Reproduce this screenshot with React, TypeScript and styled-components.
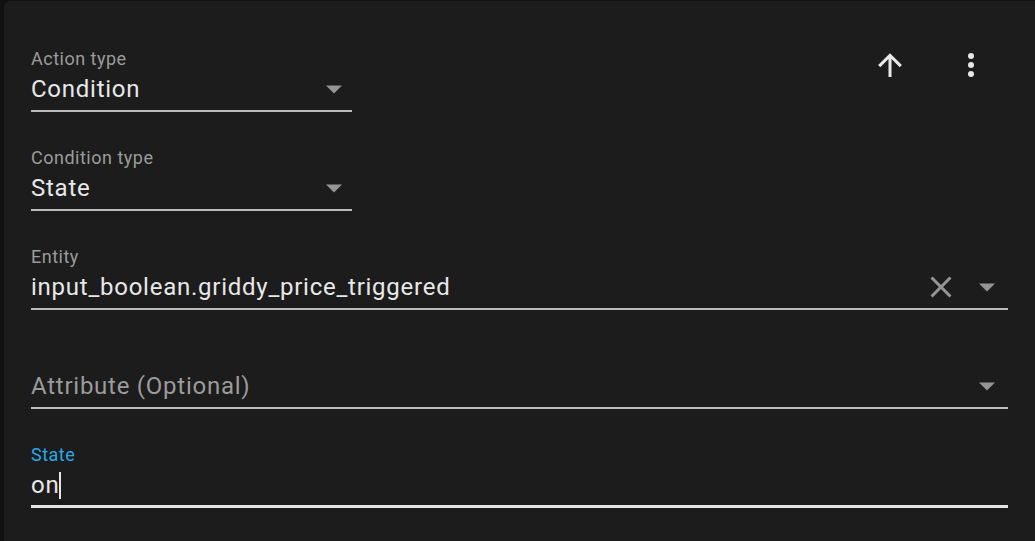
import React from "react";
import styled, { createGlobalStyle } from "styled-components";

const GlobalStyle = createGlobalStyle`
  html, body {
    margin: 0;
    padding: 0;
    background-color: #111111;
    overflow: hidden;
  }
  body {
    width: 1035px;
    height: 541px;
    font-family: Roboto, "Noto Sans", "Liberation Sans", sans-serif;
  }
`;

const Card = styled.div`
  margin: 1px 0 0 4px;
  width: 1045px;
  height: 560px;
  box-sizing: border-box;
  padding: 46px 41px 0 27px;
  background-color: #1c1c1c;
  border-radius: 6px 0 0 0;
  display: flex;
  flex-direction: column;
  gap: 34px;
`;

const TopRow = styled.div`
  display: flex;
  align-items: flex-start;
  justify-content: space-between;
`;

const Menu = styled.div`
  display: flex;
  align-items: center;
  gap: 45px;
  margin: 0 19px 0 0;
`;

const IconButton = styled.div`
  width: 36px;
  height: 36px;
  display: flex;
  align-items: center;
  justify-content: center;
  color: #e8e8e8;
  svg {
    width: 36px;
    height: 36px;
    fill: currentColor;
  }
`;

const Field = styled.div<{ $width?: number }>`
  width: ${(p) => (p.$width ? `${p.$width}px` : "100%")};
  display: flex;
  flex-direction: column;
`;

const Label = styled.div<{ $focused?: boolean }>`
  font-size: 18px;
  line-height: 24px;
  height: 24px;
  color: ${(p) => (p.$focused ? "#29a9e6" : "#9b9b9b")};
  letter-spacing: 0.5px;
`;

const ValueRow = styled.div<{ $noLabel?: boolean }>`
  margin-top: ${(p) => (p.$noLabel ? "26px" : "2px")};
  height: 32px;
  display: flex;
  align-items: center;
`;

const Value = styled.div<{ $placeholder?: boolean }>`
  flex: 1;
  font-size: 24px;
  line-height: 32px;
  letter-spacing: 0.75px;
  color: ${(p) => (p.$placeholder ? "#9b9b9b" : "#e8e8e8")};
  white-space: nowrap;
  display: flex;
  align-items: center;
`;

const Caret = styled.span`
  display: inline-block;
  width: 1.5px;
  height: 27px;
  background-color: #e6e6e6;
`;

const Trailing = styled.div<{ $right: number }>`
  display: flex;
  align-items: center;
  gap: 20px;
  margin-right: ${(p) => p.$right}px;
  color: #959595;
  svg {
    fill: currentColor;
  }
`;

const Underline = styled.div<{ $focused?: boolean }>`
  margin-top: ${(p) => (p.$focused ? "4px" : "5px")};
  height: ${(p) => (p.$focused ? "3px" : "2px")};
  background-color: ${(p) => (p.$focused ? "#e4e4e4" : "#bcbcbc")};
`;

const ArrowUp = () => (
  <svg viewBox="0 0 24 24">
    <path d="M13,20H11V8L5.5,13.5L4.08,12.08L12,4.16L19.92,12.08L18.5,13.5L13,8V20Z" />
  </svg>
);

const DotsVertical = () => (
  <svg viewBox="0 0 24 24">
    <path d="M12,16A2,2 0 0,1 14,18A2,2 0 0,1 12,20A2,2 0 0,1 10,18A2,2 0 0,1 12,16M12,10A2,2 0 0,1 14,12A2,2 0 0,1 12,14A2,2 0 0,1 10,12A2,2 0 0,1 12,10M12,4A2,2 0 0,1 14,6A2,2 0 0,1 12,8A2,2 0 0,1 10,6A2,2 0 0,1 12,4Z" />
  </svg>
);

const MenuDown = () => (
  <svg width="16" height="9" viewBox="0 0 16 9">
    <polygon points="0,0.5 16,0.5 8,8.5" />
  </svg>
);

const Close = () => (
  <svg width="36" height="36" viewBox="0 0 24 24">
    <path d="M19,6.41L17.59,5L12,10.59L6.41,5L5,6.41L10.59,12L5,17.59L6.41,19L12,13.41L17.59,19L19,17.59L13.41,12L19,6.41Z" />
  </svg>
);

export default function App() {
  return (
    <>
      <GlobalStyle />
      <Card>
        <TopRow>
          <Field $width={321}>
            <Label>Action type</Label>
            <ValueRow>
              <Value>Condition</Value>
              <Trailing $right={10}>
                <MenuDown />
              </Trailing>
            </ValueRow>
            <Underline />
          </Field>
          <Menu>
            <IconButton>
              <ArrowUp />
            </IconButton>
            <IconButton>
              <DotsVertical />
            </IconButton>
          </Menu>
        </TopRow>

        <Field $width={321}>
          <Label>Condition type</Label>
          <ValueRow>
            <Value>State</Value>
            <Trailing $right={10}>
              <MenuDown />
            </Trailing>
          </ValueRow>
          <Underline />
        </Field>

        <Field>
          <Label>Entity</Label>
          <ValueRow>
            <Value>input_boolean.griddy_price_triggered</Value>
            <Trailing $right={13}>
              <Close />
              <MenuDown />
            </Trailing>
          </ValueRow>
          <Underline />
        </Field>

        <Field>
          <ValueRow $noLabel>
            <Value $placeholder>Attribute (Optional)</Value>
            <Trailing $right={13}>
              <MenuDown />
            </Trailing>
          </ValueRow>
          <Underline />
        </Field>

        <Field>
          <Label $focused>State</Label>
          <ValueRow>
            <Value>
              on
              <Caret />
            </Value>
          </ValueRow>
          <Underline $focused />
        </Field>
      </Card>
    </>
  );
}
